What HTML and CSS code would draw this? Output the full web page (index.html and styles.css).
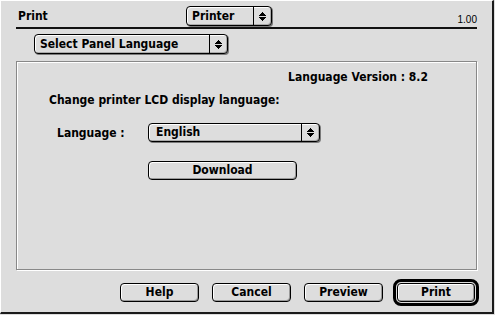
FILE: index.html
```html
<!DOCTYPE html>
<html>
<head>
<meta charset="utf-8">
<link rel="stylesheet" href="styles.css">
</head>
<body>
<div class="window">
  <div class="header">
    <div class="title">Print</div>
    <div class="popup popup-printer">
      <span class="popup-label">Printer</span>
      <span class="popup-arrows"><svg width="7" height="9" viewBox="0 0 7 9" shape-rendering="crispEdges"><path d="M3 0h1v1h1v1h1v1h1v1H0V3h1V2h1V1h1z M0 5h7v1H6v1H5v1H4v1H3V8H2V7H1V6H0z" fill="#000"/></svg></span>
    </div>
    <div class="version">1.00</div>
  </div>
  <div class="popup popup-panel">
    <span class="popup-label">Select Panel Language</span>
    <span class="popup-arrows"><svg width="7" height="9" viewBox="0 0 7 9" shape-rendering="crispEdges"><path d="M3 0h1v1h1v1h1v1h1v1H0V3h1V2h1V1h1z M0 5h7v1H6v1H5v1H4v1H3V8H2V7H1V6H0z" fill="#000"/></svg></span>
  </div>
  <div class="panel">
    <div class="lang-version">Language Version : 8.2</div>
    <div class="desc">Change printer LCD display language:</div>
    <div class="lang-row">
      <div class="lang-label">Language :</div>
      <div class="popup popup-lang">
        <span class="popup-label">English</span>
        <span class="popup-arrows"><svg width="7" height="9" viewBox="0 0 7 9" shape-rendering="crispEdges"><path d="M3 0h1v1h1v1h1v1h1v1H0V3h1V2h1V1h1z M0 5h7v1H6v1H5v1H4v1H3V8H2V7H1V6H0z" fill="#000"/></svg></span>
      </div>
    </div>
    <div class="download-row">
      <div class="btn btn-download">Download</div>
    </div>
  </div>
  <div class="footer">
    <div class="btn">Help</div>
    <div class="btn">Cancel</div>
    <div class="btn">Preview</div>
    <div class="default-ring"><div class="btn btn-print">Print</div></div>
  </div>
</div>
</body>
</html>
```

FILE: styles.css
```css
html, body {
  margin: 0;
  padding: 0;
  background: #dddddd;
}
body {
  width: 495px;
  height: 315px;
  overflow: hidden;
  font-family: "DejaVu Sans Condensed", "DejaVu Sans", sans-serif;
  font-stretch: condensed;
  font-weight: bold;
  font-size: 12px;
  color: #000;
}
.window {
  box-sizing: border-box;
  width: 494px;
  height: 314px;
  border-top: 1px solid #ffffff;
  border-left: 1px solid #ffffff;
  border-right: 2px solid #1a1a1a;
  border-bottom: 2px solid #1a1a1a;
  padding: 5px 15px 0 15px;
  display: flex;
  flex-direction: column;
}
.header {
  display: flex;
  align-items: flex-start;
  height: 21px;
  border-bottom: 2px solid #111;
}
.title {
  width: 170px;
  padding-left: 2px;
  box-sizing: border-box;
  line-height: 20px;
}
.version {
  margin-left: auto;
  font-family: "Liberation Sans", sans-serif;
  font-stretch: normal;
  font-weight: normal;
  font-size: 10px;
  line-height: 10px;
  margin-top: 9px;
}
.popup {
  box-sizing: border-box;
  display: flex;
  height: 20px;
  border: 1px solid #000;
  border-radius: 4px;
  background: #dddddd;
  box-shadow: 1px 1px 0 #7a7a7a, inset 1px 1px 0 #ffffff, inset -1px -1px 0 #aaaaaa;
}
.popup-label {
  flex: 1;
  padding-left: 5px;
  line-height: 18px;
  white-space: nowrap;
}
.popup-arrows {
  width: 17px;
  border-left: 1px solid #000;
  display: flex;
  align-items: center;
  justify-content: center;
}
.popup-arrows svg {
  display: block;
}
.popup-printer {
  width: 86px;
}
.popup-panel {
  width: 194px;
  margin: 5px 0 0 18px;
}
.panel {
  box-sizing: border-box;
  height: 209px;
  margin-top: 7px;
  border: 1px solid #888888;
  box-shadow: 1px 1px 0 #ffffff, inset 1px 1px 0 #ffffff;
  display: flex;
  flex-direction: column;
  padding: 8px 48px 0 32px;
}
.lang-version {
  align-self: flex-end;
  line-height: 14px;
}
.desc {
  margin-top: 9px;
  line-height: 14px;
}
.lang-row {
  display: flex;
  align-items: center;
  margin-top: 16px;
}
.lang-label {
  width: 99px;
  padding-left: 8px;
  box-sizing: border-box;
}
.popup-lang {
  width: 172px;
  height: 19px;
}
.popup-lang .popup-label {
  line-height: 17px;
  padding-left: 7px;
}
.download-row {
  margin-top: 19px;
  padding-left: 99px;
}
.btn {
  box-sizing: border-box;
  width: 79px;
  height: 19px;
  border: 1px solid #000;
  border-radius: 4px;
  background: #dddddd;
  box-shadow: inset 1px 1px 0 #ffffff, inset -1px -1px 0 #999999;
  text-align: center;
  line-height: 17px;
}
.btn-download {
  width: 149px;
}
.footer {
  display: flex;
  align-items: center;
  justify-content: flex-end;
  gap: 13px;
  margin-top: 9px;
  margin-right: -2px;
}
.default-ring {
  margin-left: -3px;
  border: 3px solid #000;
  border-radius: 8px;
  padding: 1px;
  background: #dddddd;
}
.btn-print {
  width: 78px;
}
```
